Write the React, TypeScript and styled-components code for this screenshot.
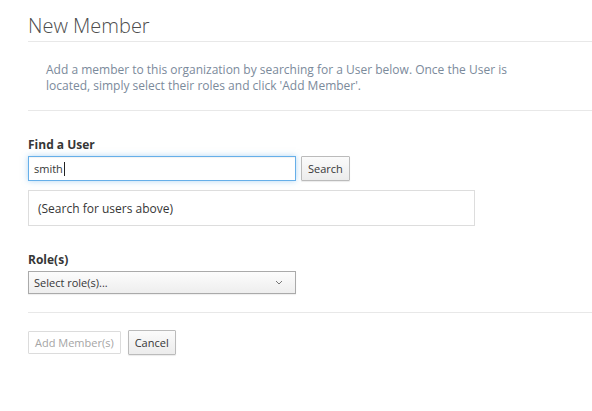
import styled, { createGlobalStyle } from "styled-components";

const GlobalStyle = createGlobalStyle`
  body {
    margin: 0;
    background: #fff;
    font-family: "Open Sans", "Liberation Sans", sans-serif;
    color: #363636;
  }
`;

const Page = styled.main`
  padding: 10px 0 40px 28px;
`;

const Title = styled.h1`
  margin: 0;
  padding: 5px 0 4px;
  font-size: 20px;
  font-weight: 300;
  line-height: 22px;
  color: #4d4d4d;
  border-bottom: 1px solid #e8e8e8;
`;

const Intro = styled.div`
  padding: 20px 0 16px 18px;
  border-bottom: 1px solid #e8e8e8;
`;

const IntroText = styled.p`
  margin: 0;
  max-width: 480px;
  font-size: 12px;
  line-height: 16px;
  color: #7b8a9b;
`;

const Field = styled.section<{ top: number }>`
  margin-top: ${(p) => p.top}px;
`;

const Label = styled.label`
  display: block;
  font-size: 12px;
  font-weight: 700;
  line-height: 16px;
  color: #363636;
  margin-bottom: 3px;
`;

const Row = styled.div`
  display: flex;
  gap: 5px;
`;

const Input = styled.div`
  box-sizing: border-box;
  width: 268px;
  height: 25px;
  padding: 0 5px;
  display: flex;
  align-items: center;
  font-size: 11px;
  color: #363636;
  border: 1px solid #66afe9;
  box-shadow: inset 0 1px 1px rgba(0, 0, 0, 0.05), 0 0 6px rgba(102, 175, 233, 0.5);
`;

const Caret = styled.span`
  display: inline-block;
  width: 1px;
  height: 14px;
  background: #222;
  margin-left: 1px;
`;

const Button = styled.button<{ disabled?: boolean }>`
  box-sizing: border-box;
  height: ${(p) => (p.disabled ? "23px" : "25px")};
  padding: 0 6px;
  font-family: inherit;
  font-size: 11px;
  color: ${(p) => (p.disabled ? "#a5a5a5" : "#363636")};
  background: ${(p) =>
    p.disabled ? "#fff" : "linear-gradient(#fbfbfb, #ececec)"};
  border: 1px solid ${(p) => (p.disabled ? "#dcdcdc" : "#bbb")};
  box-shadow: ${(p) => (p.disabled ? "none" : "0 1px 1px rgba(0,0,0,0.08)")};
  border-radius: 1px;
`;

const Results = styled.div`
  box-sizing: border-box;
  width: 447px;
  height: 36px;
  margin-top: 9px;
  padding: 0 9px;
  display: flex;
  align-items: center;
  font-size: 12px;
  color: #363636;
  border: 1px solid #ddd;
`;

const Select = styled.div`
  box-sizing: border-box;
  width: 268px;
  height: 23px;
  padding: 0 12px 0 5px;
  display: flex;
  align-items: center;
  justify-content: space-between;
  font-size: 11px;
  color: #363636;
  background: linear-gradient(#fcfcfc, #eeeeee);
  border: 1px solid #aaa;
  box-shadow: 0 1px 1px rgba(0, 0, 0, 0.06);
`;

const Divider = styled.hr`
  margin: 18px 0 17px;
  border: 0;
  border-top: 1px solid #e8e8e8;
`;

const Actions = styled.div`
  display: flex;
  align-items: center;
  gap: 7px;
`;

const Chevron = () => (
  <svg width="8" height="5" viewBox="0 0 8 5">
    <path d="M1 1l3 3 3-3" fill="none" stroke="#777" strokeWidth="1" />
  </svg>
);

const App = () => {
  return (
    <>
      <GlobalStyle />
      <Page>
        <Title>New Member</Title>
        <Intro>
          <IntroText>
            Add a member to this organization by searching for a User below.
            Once the User is located, simply select their roles and click 'Add
            Member'.
          </IntroText>
        </Intro>
        <Field top={26}>
          <Label>Find a User</Label>
          <Row>
            <Input>
              smith
              <Caret />
            </Input>
            <Button>Search</Button>
          </Row>
          <Results>(Search for users above)</Results>
        </Field>
        <Field top={26}>
          <Label>Role(s)</Label>
          <Select>
            Select role(s)...
            <Chevron />
          </Select>
        </Field>
        <Divider />
        <Actions>
          <Button disabled>Add Member(s)</Button>
          <Button>Cancel</Button>
        </Actions>
      </Page>
    </>
  );
};

export default App;
